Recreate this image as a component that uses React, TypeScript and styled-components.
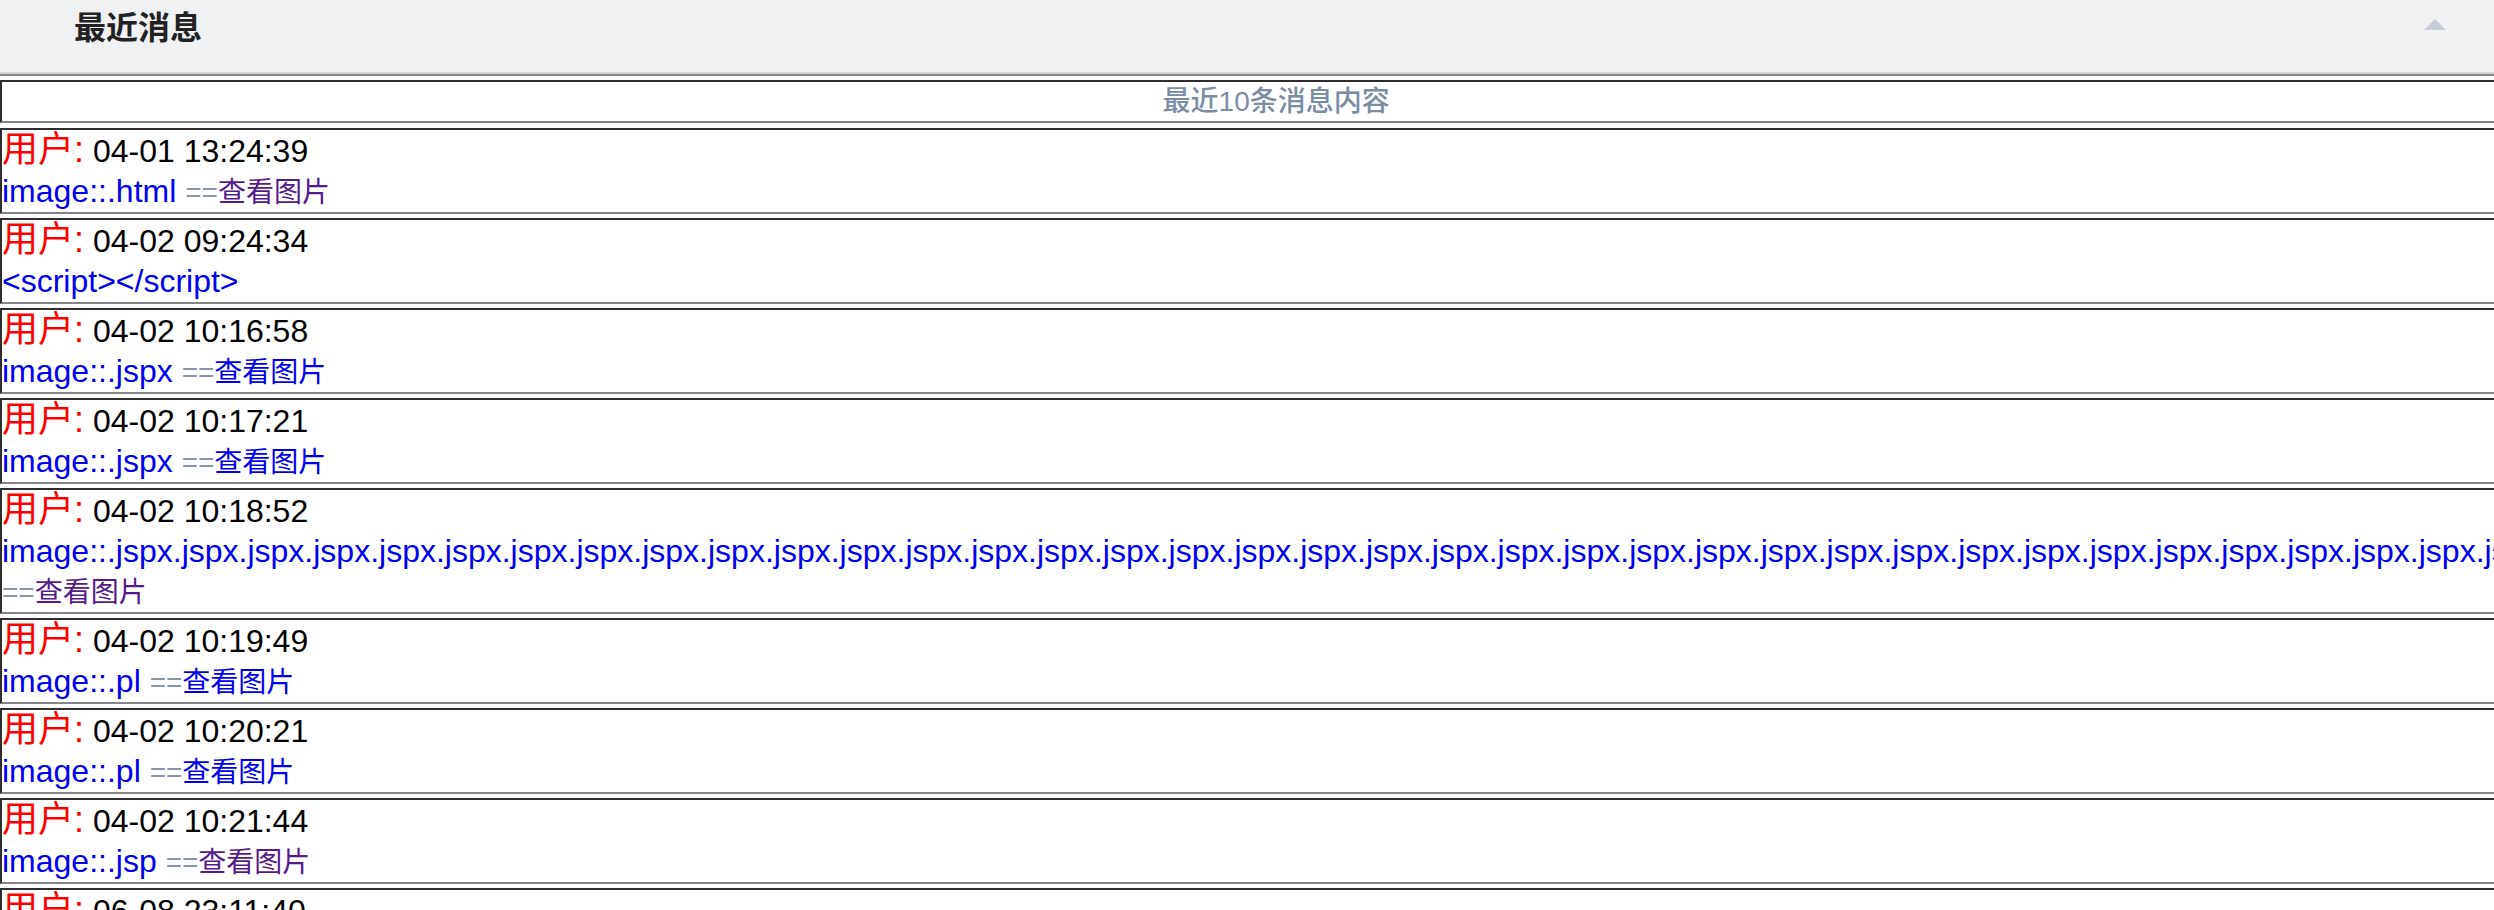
import React from 'react';
import styled, { createGlobalStyle } from 'styled-components';

const GlobalStyle = createGlobalStyle`
  html, body {
    margin: 0;
    padding: 0;
    overflow: hidden;
    background: #ffffff;
  }
  body {
    font-family: "Liberation Sans", "Noto Sans CJK SC", Arial, sans-serif;
    color: #000000;
  }
`;

const Page = styled.div`
  display: flex;
  flex-direction: column;
  align-items: flex-start;
`;

const PanelHeader = styled.header`
  box-sizing: border-box;
  align-self: stretch;
  display: flex;
  align-items: flex-start;
  height: 74px;
  padding: 8px 48px 0 74px;
  background: #eff1f3;
  border-bottom: 2px solid #d3d6da;
`;

const PanelTitle = styled.h2`
  margin: 0;
  font-size: 32px;
  line-height: 40px;
  font-weight: 700;
  color: #222222;
`;

const CollapseToggle = styled.span`
  margin-left: auto;
  margin-top: 11px;
  width: 0;
  height: 0;
  border-left: 11px solid transparent;
  border-right: 11px solid transparent;
  border-bottom: 11px solid #c7cdd6;
`;

const MessageTable = styled.div`
  display: grid;
  width: min-content;
  min-width: 100%;
  row-gap: 4px;
  padding-top: 4px;
  border-top: 2px solid #888888;
`;

const Cell = styled.div`
  border-top: 2px solid #2e2e2e;
  border-left: 2px solid #2e2e2e;
  border-bottom: 2px solid #868686;
  border-right: 2px solid #868686;
`;

const CaptionCell = styled(Cell)`
  margin-bottom: 1px;
  text-align: center;
  font-size: 28px;
  line-height: 39px;
  font-weight: 500;
  color: #7b8da4;
`;

const MessageCell = styled(Cell)`
  padding: 1px 0;
  font-size: 32px;
  line-height: 40px;
`;

const Line = styled.div`
  font-size: 32px;
  line-height: 40px;
`;

const UserLabel = styled.span`
  font-size: 36px;
  line-height: 1;
  color: #ff0000;
`;

const Time = styled.span`
  color: #000000;
`;

const Content = styled.span`
  color: #0000f0;
`;

const Separator = styled.span`
  font-size: 28px;
  line-height: 1;
  color: #8796a8;
`;

const ViewLink = styled.a<{ $visited: boolean }>`
  font-size: 28px;
  line-height: 1;
  text-decoration: none;
  color: ${(p) => (p.$visited ? '#551a8b' : '#0000ee')};
`;

type Message = {
  time: string;
  content: string;
  link: 'visited' | 'new' | null;
};

const messages: Message[] = [
  { time: '04-01 13:24:39', content: 'image::.html', link: 'visited' },
  { time: '04-02 09:24:34', content: '<script></script>', link: null },
  { time: '04-02 10:16:58', content: 'image::.jspx', link: 'new' },
  { time: '04-02 10:17:21', content: 'image::.jspx', link: 'new' },
  { time: '04-02 10:18:52', content: 'image::.' + 'jspx.'.repeat(37), link: 'visited' },
  { time: '04-02 10:19:49', content: 'image::.pl', link: 'new' },
  { time: '04-02 10:20:21', content: 'image::.pl', link: 'new' },
  { time: '04-02 10:21:44', content: 'image::.jsp', link: 'visited' },
  { time: '06-08 23:11:40', content: 'image::.jsp', link: 'new' },
];

export default function App() {
  return (
    <>
      <GlobalStyle />
      <Page>
        <PanelHeader>
          <PanelTitle>最近消息</PanelTitle>
          <CollapseToggle aria-label="collapse" />
        </PanelHeader>
        <MessageTable>
          <CaptionCell>最近10条消息内容</CaptionCell>
          {messages.map((m, i) => (
            <MessageCell key={i}>
              <Line>
                <UserLabel>用户:</UserLabel> <Time>{m.time}</Time>
              </Line>
              <Line>
                <Content>{m.content}</Content>
                {m.link && (
                  <>
                    {' '}
                    <Separator>==</Separator>
                    <ViewLink href="#" $visited={m.link === 'visited'}>
                      查看图片
                    </ViewLink>
                  </>
                )}
              </Line>
            </MessageCell>
          ))}
        </MessageTable>
      </Page>
    </>
  );
}
